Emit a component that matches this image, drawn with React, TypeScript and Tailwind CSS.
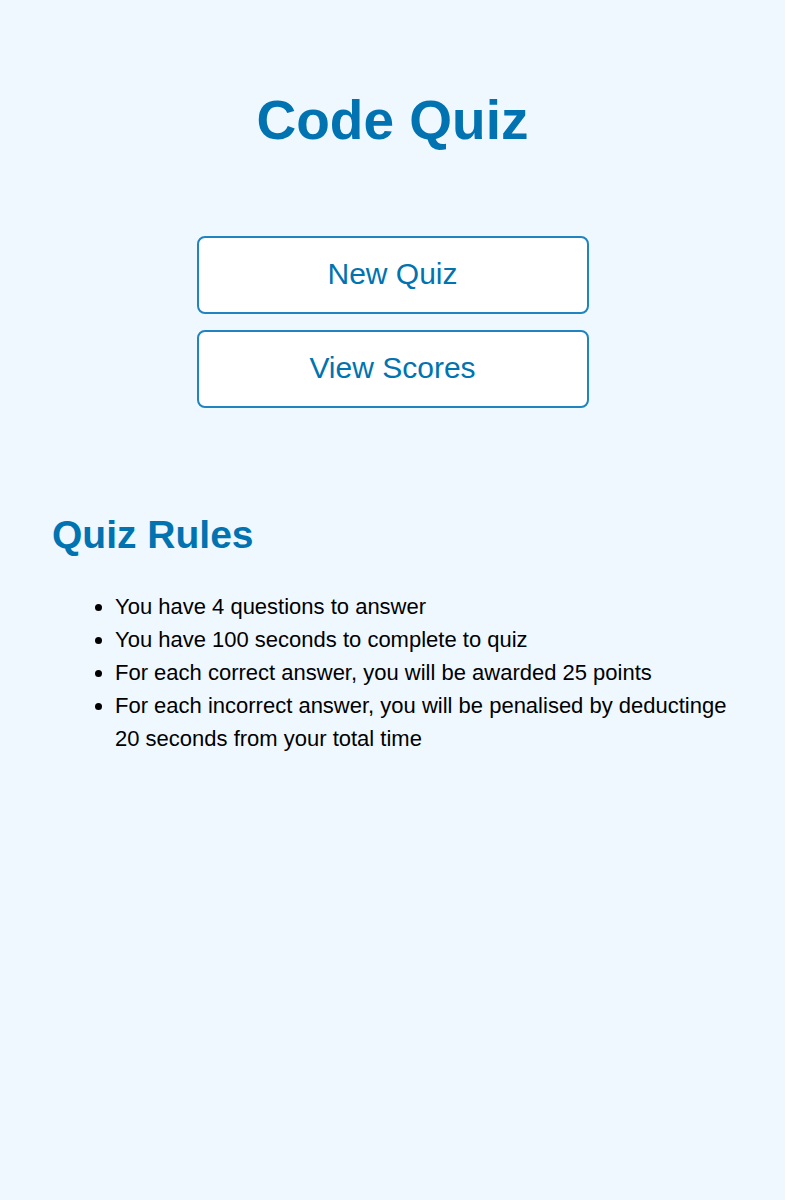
export default function App() {
  const rules = [
    'You have 4 questions to answer',
    'You have 100 seconds to complete to quiz',
    'For each correct answer, you will be awarded 25 points',
    'For each incorrect answer, you will be penalised by deductinge 20 seconds from your total time',
  ]

  return (
    <div className="min-h-[1200px] bg-[#eff7ff] font-['Liberation_Sans',Arial,sans-serif] text-black">
      <header className="pt-[88px] text-center">
        <h1 className="text-[55px] font-bold leading-[64px] text-[#0073b0]">Code Quiz</h1>
      </header>

      <div className="mt-[84px] flex flex-col items-center gap-4">
        <button
          type="button"
          className="h-[78px] w-[392px] rounded-lg border-2 border-[#1f84c0] bg-white pb-[4px] text-[30px] text-[#0073b0]"
        >
          New Quiz
        </button>
        <button
          type="button"
          className="h-[78px] w-[392px] rounded-lg border-2 border-[#1f84c0] bg-white pb-[4px] text-[30px] text-[#0073b0]"
        >
          View Scores
        </button>
      </div>

      <section className="mt-[103px] px-[52px]">
        <h2 className="text-[39px] font-bold leading-[48px] text-[#0073b0]">Quiz Rules</h2>
        <ul className="mt-[31px] list-disc pl-[63px] text-[22px] leading-[33px]">
          {rules.map((rule) => (
            <li key={rule}>{rule}</li>
          ))}
        </ul>
      </section>
    </div>
  )
}
